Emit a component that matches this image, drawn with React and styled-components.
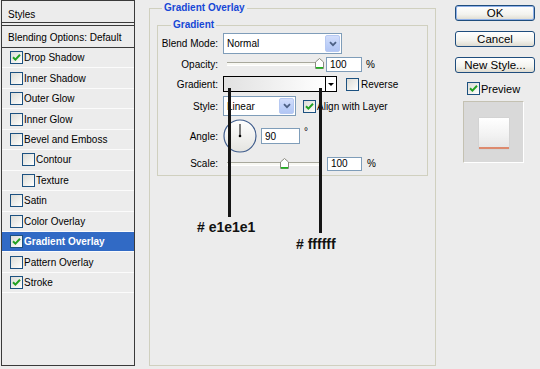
import React from 'react';
import styled, { createGlobalStyle } from 'styled-components';

const GlobalStyle = createGlobalStyle`
  html, body {
    margin: 0;
    padding: 0;
    background: #ececec;
  }
  body {
    font-family: "Liberation Sans", Arial, sans-serif;
    font-size: 10px;
    color: #000;
  }
`;

const Dialog = styled.div`
  position: relative;
  display: flex;
  align-items: flex-start;
  width: 540px;
  height: 369px;
  overflow: hidden;
  background: #ececec;
`;

/* ---------- left styles list ---------- */

const StylesPanel = styled.div`
  margin-left: 1px;
  width: 134px;
  height: 366px;
  box-sizing: border-box;
  border: 1px solid #3a3a3a;
  display: flex;
  flex-direction: column;
`;

const PanelHeader = styled.div`
  height: 22px;
  box-sizing: border-box;
  border-bottom: 1px solid #3a3a3a;
  display: flex;
  align-items: flex-end;
  padding: 0 0 1px 6px;
  line-height: 12px;
`;

const BlendingItem = styled.div`
  margin-top: 2px;
  height: 23px;
  box-sizing: border-box;
  border-top: 1px solid #3a3a3a;
  border-bottom: 1px solid #3a3a3a;
  display: flex;
  align-items: center;
  padding: 1px 0 0 6px;
`;

const StyleRow = styled.div`
  height: 20.45px;
  box-sizing: border-box;
  border-bottom: 1px solid #fbfbfb;
  display: flex;
  align-items: center;
  gap: 1px;
  padding-left: ${(p) => (p.$indent ? 20 : 8)}px;
  background: ${(p) => (p.$active ? '#316ac5' : 'transparent')};
  color: ${(p) => (p.$active ? '#fff' : '#000')};
  font-weight: ${(p) => (p.$active ? 'bold' : 'normal')};
`;

/* ---------- shared controls ---------- */

const Box = styled.span`
  flex: none;
  width: 13px;
  height: 13px;
  box-sizing: border-box;
  border: 1px solid #1c5180;
  background: linear-gradient(135deg, #dcdcd7 0%, #f4f4f1 70%, #ffffff 100%);
  display: flex;
  align-items: center;
  justify-content: center;

  svg {
    width: 9px;
    height: 9px;
  }
`;

const Checkbox = ({ checked }) => (
  <Box>
    {checked && (
      <svg viewBox="0 0 9 9">
        <path d="M1 4.2 L3.4 6.6 L8 1.8" fill="none" stroke="#21a121" strokeWidth="2" />
      </svg>
    )}
  </Box>
);

const Field = styled.div`
  flex: none;
  width: ${(p) => p.$w}px;
  height: ${(p) => p.$h}px;
  box-sizing: border-box;
  border: 1px solid #7f9db9;
  background: #fff;
  display: flex;
  align-items: center;
  padding-left: 3px;
  margin-left: ${(p) => p.$ml || 0}px;
`;

const Select = styled(Field)`
  justify-content: space-between;
  padding-right: 1px;
`;

const DropButton = styled.span`
  width: 15px;
  height: calc(100% - 2px);
  box-sizing: border-box;
  border-radius: 2px;
  border: 1px solid #b7c9f2;
  background: linear-gradient(180deg, #d3defb 0%, #bccff8 60%, #b2c6f4 100%);
  display: flex;
  align-items: center;
  justify-content: center;

  svg {
    width: 8px;
    height: 6px;
  }
`;

const Chevron = () => (
  <svg viewBox="0 0 8 6">
    <path d="M1 1.2 L4 4.2 L7 1.2" fill="none" stroke="#4d6185" strokeWidth="1.8" />
  </svg>
);

/* ---------- gradient overlay group ---------- */

const Group = styled.fieldset`
  margin: 0;
  padding: 0;
  box-sizing: border-box;
  border: 1px solid #d0d0bf;
  min-inline-size: auto;
`;

const OuterGroup = styled(Group)`
  margin: 2px 0 0 14px;
  padding: 5px 7px 0 7px;
  width: 287px;
  height: 364px;
`;

const InnerGroup = styled(Group)`
  width: 271px;
  padding: 2px 0 4px 0;
`;

const Legend = styled.legend`
  margin-left: ${(p) => p.$ml}px;
  padding: 0 2px;
  font-weight: bold;
  color: #1647d6;
  line-height: 12px;
`;

const FormRow = styled.div`
  display: flex;
  align-items: center;
  height: ${(p) => p.$h}px;
  margin-top: ${(p) => p.$mt || 0}px;
`;

const Label = styled.span`
  flex: none;
  width: 60px;
  margin-right: 5px;
  text-align: right;
`;

const Slider = styled.div`
  position: relative;
  flex: none;
  width: 92px;
  height: 14px;
  margin-left: 4px;
  display: flex;
  align-items: center;
`;

const Track = styled.div`
  width: 100%;
  height: 2px;
  border-top: 1px solid #a8a89c;
  background: #f7f7f2;
  border-bottom: 1px solid #ffffff;
`;

const Thumb = styled.svg`
  position: absolute;
  top: 1px;
  width: 9px;
  height: 11px;
`;

const Unit = styled.span`
  margin-left: ${(p) => p.$ml || 4}px;
  align-self: ${(p) => (p.$sup ? 'flex-start' : 'center')};
  margin-top: ${(p) => (p.$sup ? 7 : 0)}px;
`;

const GradientBox = styled.div`
  flex: none;
  width: 114px;
  height: 16px;
  box-sizing: border-box;
  border: 1px solid #000;
  display: flex;
`;

const GradientFill = styled.div`
  flex: 1;
  background: linear-gradient(to right, #e1e1e1, #ffffff);
`;

const GradientArrow = styled.div`
  width: 10px;
  border-left: 1px solid #000;
  background: #fff;
  display: flex;
  align-items: center;
  justify-content: center;

  &::after {
    content: '';
    border-left: 3px solid transparent;
    border-right: 3px solid transparent;
    border-top: 3px solid #000;
  }
`;

const CheckLabel = styled.label`
  display: flex;
  align-items: center;
  gap: ${(p) => p.$gap || 2}px;
  margin-left: ${(p) => p.$ml || 0}px;
`;

const Dial = styled.svg`
  flex: none;
  width: 34px;
  height: 34px;
`;

/* ---------- right column ---------- */

const ActionColumn = styled.div`
  margin-left: 19px;
  width: 80px;
  padding-top: 5px;
  display: flex;
  flex-direction: column;
`;

const Button = styled.button`
  width: 80px;
  height: 16px;
  margin: 0 0 10px 0;
  padding: 0;
  box-sizing: border-box;
  border: 1px solid #1f4d7d;
  border-radius: 3px;
  background: linear-gradient(180deg, #ffffff 0%, #f3f3ee 60%, #dedbd0 100%);
  box-shadow: ${(p) => (p.$primary ? 'inset 0 0 0 1px #8fb0e8' : 'none')};
  font-family: "Liberation Sans", Arial, sans-serif;
  font-size: 11.5px;
  line-height: 14px;
  color: #000;
`;

const PreviewToggle = styled(CheckLabel)`
  margin: -1px 0 0 12px;
  font-size: 11px;
`;

const PreviewBox = styled.div`
  margin: 6px 0 0 8px;
  width: 61px;
  height: 62px;
  box-sizing: border-box;
  border-top: 1px solid #c4c1b2;
  border-left: 1px solid #c4c1b2;
  border-right: 1px solid #ffffff;
  border-bottom: 1px solid #ffffff;
  background: #d9d9d9;
  display: flex;
  align-items: center;
  justify-content: center;
  padding-top: 2px;
`;

const Swatch = styled.div`
  width: 30px;
  height: 31px;
  box-sizing: border-box;
  background: linear-gradient(180deg, #ffffff 0%, #f2f2f2 60%, #e6e6e6 100%);
  border-bottom: 2px solid #dd8a6e;
  box-shadow: 0 0 1px rgba(0, 0, 0, 0.15);
`;

/* ---------- annotation callouts ---------- */

const CalloutLine = styled.div`
  position: absolute;
  left: ${(p) => p.$x}px;
  top: 88px;
  width: 3px;
  height: ${(p) => p.$h}px;
  background: #151515;
`;

const CalloutText = styled.div`
  position: absolute;
  left: ${(p) => p.$x}px;
  top: ${(p) => p.$y}px;
  font-size: 14px;
  line-height: 16px;
  font-weight: bold;
  color: #111;
  white-space: nowrap;
`;

const effects = [
  { name: 'Drop Shadow', checked: true },
  { name: 'Inner Shadow' },
  { name: 'Outer Glow' },
  { name: 'Inner Glow' },
  { name: 'Bevel and Emboss' },
  { name: 'Contour', indent: true },
  { name: 'Texture', indent: true },
  { name: 'Satin' },
  { name: 'Color Overlay' },
  { name: 'Gradient Overlay', checked: true, active: true },
  { name: 'Pattern Overlay' },
  { name: 'Stroke', checked: true },
];

const SliderThumb = ({ pos }) => (
  <Thumb viewBox="0 0 9 11" style={{ left: `calc(${pos * 100}% - 4.5px)` }}>
    <path d="M0.5 4 L4.5 0.5 L8.5 4 L8.5 10.5 L0.5 10.5 Z" fill="#fff" stroke="#8a8a80" />
    <path d="M1 9.8 L8 9.8" stroke="#1eb41e" strokeWidth="1.6" />
  </Thumb>
);

export default function App() {
  return (
    <>
      <GlobalStyle />
      <Dialog>
        <StylesPanel>
          <PanelHeader>Styles</PanelHeader>
          <BlendingItem>Blending Options: Default</BlendingItem>
          {effects.map((fx) => (
            <StyleRow key={fx.name} $indent={fx.indent} $active={fx.active}>
              <Checkbox checked={fx.checked} />
              {fx.name}
            </StyleRow>
          ))}
        </StylesPanel>

        <OuterGroup>
          <Legend $ml={5}>Gradient Overlay</Legend>
          <InnerGroup>
            <Legend $ml={13}>Gradient</Legend>

            <FormRow $h={21}>
              <Label>Blend Mode:</Label>
              <Select $w={119} $h={21}>
                Normal
                <DropButton><Chevron /></DropButton>
              </Select>
            </FormRow>

            <FormRow $h={16} $mt={2}>
              <Label>Opacity:</Label>
              <Slider>
                <Track />
                <SliderThumb pos={1} />
              </Slider>
              <Field $w={36} $h={15} $ml={7}>100</Field>
              <Unit>%</Unit>
            </FormRow>

            <FormRow $h={16} $mt={4}>
              <Label>Gradient:</Label>
              <GradientBox>
                <GradientFill />
                <GradientArrow />
              </GradientBox>
              <CheckLabel $ml={9}>
                <Checkbox />
                Reverse
              </CheckLabel>
            </FormRow>

            <FormRow $h={20} $mt={4}>
              <Label>Style:</Label>
              <Select $w={73} $h={20}>
                Linear
                <DropButton><Chevron /></DropButton>
              </Select>
              <CheckLabel $ml={7} $gap={1}>
                <Checkbox checked />
                Align with Layer
              </CheckLabel>
            </FormRow>

            <FormRow $h={34} $mt={3}>
              <Label>Angle:</Label>
              <Dial viewBox="0 0 34 34">
                <defs>
                  <linearGradient id="dialFill" x1="0" y1="0" x2="0" y2="1">
                    <stop offset="0" stopColor="#ffffff" />
                    <stop offset="1" stopColor="#e4e4e0" />
                  </linearGradient>
                </defs>
                <circle cx="17" cy="17" r="16" fill="url(#dialFill)" stroke="#3f5c8c" strokeWidth="1.2" />
                <line x1="17" y1="17" x2="17" y2="5" stroke="#000" strokeWidth="1" />
                <circle cx="17" cy="17" r="1.3" fill="#000" />
              </Dial>
              <Field $w={39} $h={16} $ml={4}>90</Field>
              <Unit $sup>°</Unit>
            </FormRow>

            <FormRow $h={15} $mt={3}>
              <Label>Scale:</Label>
              <Slider>
                <Track />
                <SliderThumb pos={0.62} />
              </Slider>
              <Field $w={35} $h={14} $ml={8}>100</Field>
              <Unit $ml={5}>%</Unit>
            </FormRow>
          </InnerGroup>
        </OuterGroup>

        <ActionColumn>
          <Button $primary>OK</Button>
          <Button>Cancel</Button>
          <Button>New Style...</Button>
          <PreviewToggle $gap={1}>
            <Checkbox checked />
            Preview
          </PreviewToggle>
          <PreviewBox>
            <Swatch />
          </PreviewBox>
        </ActionColumn>

        <CalloutLine $x={228} $h={129} />
        <CalloutLine $x={319} $h={145} />
        <CalloutText $x={197} $y={219}># e1e1e1</CalloutText>
        <CalloutText $x={296} $y={236}># ffffff</CalloutText>
      </Dialog>
    </>
  );
}
